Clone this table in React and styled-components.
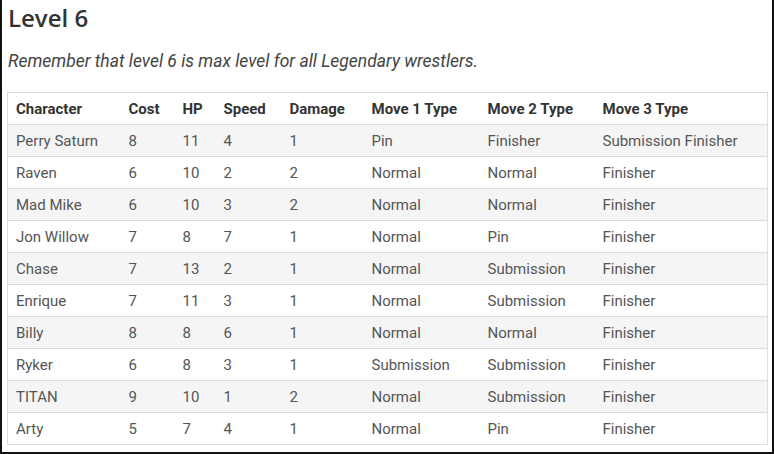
import React from "react";
import styled, { createGlobalStyle } from "styled-components";

const GlobalStyle = createGlobalStyle`
  html, body {
    margin: 0;
    padding: 0;
    background: #fff;
  }
`;

const Page = styled.div`
  box-sizing: border-box;
  width: 774px;
  height: 454px;
  padding: 0 6px 0 6px;
  border-left: 2px solid #111;
  border-right: 2px solid #111;
  border-bottom: 2px solid #111;
  font-family: Roboto, "Liberation Sans", sans-serif;
`;

const Title = styled.h2`
  margin: 0;
  padding-top: 2px;
  font-family: "Open Sans", "Liberation Sans", sans-serif;
  font-weight: 600;
  font-size: 24px;
  line-height: 32px;
  color: #333;
`;

const Note = styled.p`
  margin: 15px 0 19px;
  font-style: italic;
  font-size: 17.5px;
  line-height: 24px;
  color: #444;
`;

const Table = styled.table`
  width: 760px;
  margin-left: -1px;
  border-collapse: collapse;
  table-layout: fixed;
  border: 1px solid #ddd;
  font-size: 15px;
`;

const Th = styled.th`
  box-sizing: border-box;
  width: ${(p) => p.$w}px;
  height: 32px;
  padding: 0 8px;
  text-align: left;
  font-weight: 700;
  color: #333;
  border-bottom: 1px solid #ddd;
`;

const Row = styled.tr`
  background: ${(p) => (p.$odd ? "#f5f5f5" : "#fff")};
`;

const Td = styled.td`
  box-sizing: border-box;
  height: 32px;
  padding: 0 8px;
  color: #555;
  border-top: 1px solid #ddd;
  white-space: nowrap;
`;

const columns = [
  ["Character", 113],
  ["Cost", 54],
  ["HP", 41],
  ["Speed", 66],
  ["Damage", 82],
  ["Move 1 Type", 116],
  ["Move 2 Type", 115],
  ["Move 3 Type", 173],
];

const rows = [
  ["Perry Saturn", 8, 11, 4, 1, "Pin", "Finisher", "Submission Finisher"],
  ["Raven", 6, 10, 2, 2, "Normal", "Normal", "Finisher"],
  ["Mad Mike", 6, 10, 3, 2, "Normal", "Normal", "Finisher"],
  ["Jon Willow", 7, 8, 7, 1, "Normal", "Pin", "Finisher"],
  ["Chase", 7, 13, 2, 1, "Normal", "Submission", "Finisher"],
  ["Enrique", 7, 11, 3, 1, "Normal", "Submission", "Finisher"],
  ["Billy", 8, 8, 6, 1, "Normal", "Normal", "Finisher"],
  ["Ryker", 6, 8, 3, 1, "Submission", "Submission", "Finisher"],
  ["TITAN", 9, 10, 1, 2, "Normal", "Submission", "Finisher"],
  ["Arty", 5, 7, 4, 1, "Normal", "Pin", "Finisher"],
];

export default function App() {
  return (
    <Page>
      <GlobalStyle />
      <Title>Level 6</Title>
      <Note>Remember that level 6 is max level for all Legendary wrestlers.</Note>
      <Table>
        <thead>
          <tr>
            {columns.map(([name, w]) => (
              <Th key={name} $w={w}>
                {name}
              </Th>
            ))}
          </tr>
        </thead>
        <tbody>
          {rows.map((r, i) => (
            <Row key={r[0]} $odd={i % 2 === 0}>
              {r.map((cell, j) => (
                <Td key={j}>{cell}</Td>
              ))}
            </Row>
          ))}
        </tbody>
      </Table>
    </Page>
  );
}
